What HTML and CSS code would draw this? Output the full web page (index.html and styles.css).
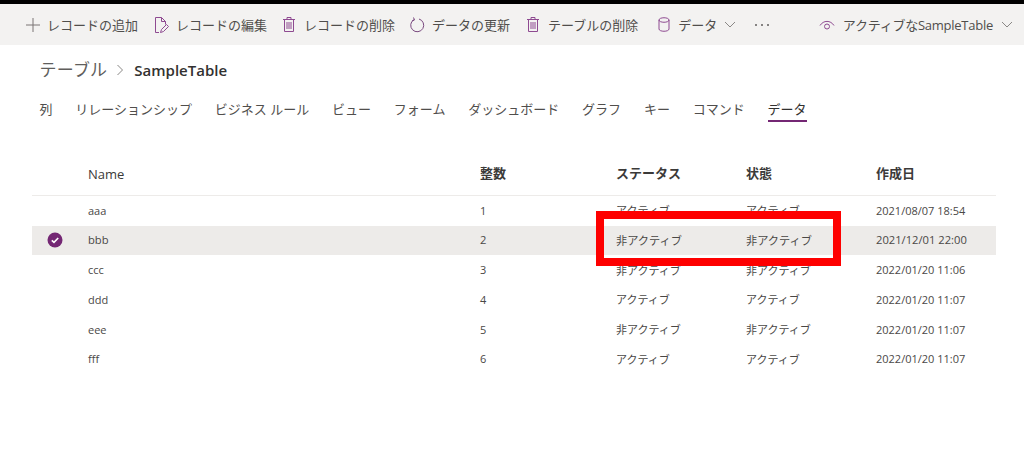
FILE: index.html
```html
<!DOCTYPE html>
<html lang="ja">
<head>
<meta charset="utf-8">
<title>SampleTable</title>
<link rel="stylesheet" href="styles.css">
</head>
<body>
<div class="topline"></div>
<header class="toolbar">
  <div class="cmds">
    <div class="cmd c-add"><svg width="16" height="16" viewBox="0 0 16 16"><path d="M8 1v14M1 8h14" stroke="#7a7574" fill="none"/></svg><span>レコードの追加</span></div>
    <div class="cmd c-edit"><svg width="16" height="18" viewBox="0 0 16 18"><path d="M6 16.500H2.500V1.500h6l4 4v3M8.500 1.500v4h4M7.500 16.500l1-3 5-5 2 2-5 5z" stroke="#8e4a91" fill="none"/></svg><span>レコードの編集</span></div>
    <div class="cmd c-del"><svg width="14" height="17" viewBox="0 0 14 17"><path d="M1 3.500h12M5 3.500V1.500h4v2M2.500 3.500v12h9v-12M5 6v7M7 6v7M9 6v7" stroke="#8e4a91" fill="none"/></svg><span>レコードの削除</span></div>
    <div class="cmd c-ref"><svg width="16" height="16" viewBox="0 0 16 16"><path d="M5 2.600A6.500 6.500 0 1 0 10 2M4.500 .5L5.500 3 3 4" stroke="#7a4a80" fill="none"/></svg><span>データの更新</span></div>
    <div class="cmd c-tdel"><svg width="14" height="17" viewBox="0 0 14 17"><path d="M1 3.500h12M5 3.500V1.500h4v2M2.500 3.500v12h9v-12M5 6v7M7 6v7M9 6v7" stroke="#8e4a91" fill="none"/></svg><span>テーブルの削除</span></div>
    <div class="cmd c-data"><svg width="12" height="15" viewBox="0 0 12 15"><path d="M1 3v9c0 3 10 3 10 0V3C11 0 1 0 1 3c0 3 10 3 10 0" stroke="#8e4a91" fill="none"/></svg><span>データ</span><svg class="chev" width="12" height="7" viewBox="0 0 12 7"><path d="M1 1l5 5 5-5" stroke="#8a8886" fill="none"/></svg></div>
    <div class="more"><i></i><i></i><i></i></div>
  </div>
  <div class="cmd view"><svg width="16" height="12" viewBox="0 0 16 12"><path d="M1 6.500C4.500 1 11.500 1 15 6.500" stroke="#8e4a91" fill="none"/><circle cx="8" cy="7.500" r="2.500" stroke="#8e4a91" fill="none"/></svg><span>アクティブなSampleTable</span><svg class="chev" width="12" height="7" viewBox="0 0 12 7"><path d="M1 1l5 5 5-5" stroke="#8a8886" fill="none"/></svg></div>
</header>
<main class="content">
  <nav class="crumb"><span class="crumb-root">テーブル</span><svg width="8" height="12" viewBox="0 0 8 12"><path d="M1.500 1l5 5-5 5" stroke="#8a8886" fill="none"/></svg><span class="crumb-cur">SampleTable</span></nav>
  <nav class="tabs">
    <span>列</span><span>リレーションシップ</span><span>ビジネス ルール</span><span>ビュー</span><span>フォーム</span><span>ダッシュボード</span><span>グラフ</span><span>キー</span><span>コマンド</span><span class="active">データ</span>
  </nav>
  <section class="grid">
    <div class="row head"><div></div><div class="name">Name</div><div class="ja">整数</div><div class="ja">ステータス</div><div class="ja">状態</div><div class="ja">作成日</div></div>
    <div class="row"><div></div><div>aaa</div><div>1</div><div>アクティブ</div><div>アクティブ</div><div>2021/08/07 18:54</div></div>
    <div class="row selected"><div class="check"><svg width="16" height="16" viewBox="0 0 16 16"><circle cx="8" cy="8" r="7.500" fill="#742774"/><path d="M4.800 8.300l2.200 2.100 4.200-4.400" stroke="#fff" stroke-width="1.600" fill="none"/></svg></div><div>bbb</div><div>2</div><div>非アクティブ</div><div>非アクティブ</div><div>2021/12/01 22:00</div></div>
    <div class="row"><div></div><div>ccc</div><div>3</div><div>非アクティブ</div><div>非アクティブ</div><div>2022/01/20 11:06</div></div>
    <div class="row"><div></div><div>ddd</div><div>4</div><div>アクティブ</div><div>アクティブ</div><div>2022/01/20 11:07</div></div>
    <div class="row"><div></div><div>eee</div><div>5</div><div>非アクティブ</div><div>非アクティブ</div><div>2022/01/20 11:07</div></div>
    <div class="row"><div></div><div>fff</div><div>6</div><div>アクティブ</div><div>アクティブ</div><div>2022/01/20 11:07</div></div>
    <div class="redbox"></div>
  </section>
</main>
</body>
</html>
```
FILE: styles.css
```css
* { box-sizing: border-box; }
html, body { margin: 0; padding: 0; }
body {
  width: 1024px;
  height: 466px;
  overflow: hidden;
  background: #fff;
  color: #323130;
  font-family: "Open Sans", "Noto Sans CJK JP", sans-serif;
}
.topline { height: 4px; background: #000; }
.toolbar {
  height: 41px;
  background: #f3f2f1;
  display: flex;
  align-items: center;
  justify-content: space-between;
  padding: 0 11px 0 25px;
  font-size: 13px;
  color: #504e4c;
}
.cmds { display: flex; align-items: center; }
.cmd { display: flex; align-items: center; gap: 6px; white-space: nowrap; }
.c-edit { margin-left: 15px; gap: 7px; }
.c-del { margin-left: 15px; gap: 8px; }
.c-ref { margin-left: 14px; gap: 7px; }
.c-tdel { margin-left: 16px; gap: 8px; }
.c-data { margin-left: 20px; gap: 8px; }
.c-data .chev { margin-left: -1px; }
.more { display: flex; gap: 4px; margin-left: 19px; }
.more i { width: 2px; height: 2px; border-radius: 50%; background: #605e5c; }
.view { gap: 8px; letter-spacing: -0.25px; }
.content { padding: 0 28px 0 32px; }
.crumb {
  display: flex;
  align-items: center;
  height: 50px;
  padding-left: 7.500px;
  gap: 9px;
}
.crumb-root { font-size: 17px; color: #605e5c; margin-bottom: 3px; letter-spacing: 0.2px; }
.crumb-cur { font-size: 15px; font-weight: 600; color: #323130; margin-left: 1px; }
.tabs {
  display: flex;
  gap: 22.800px;
  height: 32px;
  padding-left: 7.500px;
  font-size: 13px;
  line-height: 28px;
  color: #504e4c;
}
.tabs span { height: 26px; }
.tabs .active { height: 27px; border-bottom: 2px solid #742774; color: #323130; }
.grid { position: relative; margin-top: 26px; }
.row {
  display: grid;
  grid-template-columns: 56px 392px 136px 130px 130px 120px;
  align-items: center;
  height: 29.800px;
  padding-bottom: 1px;
  font-size: 11px;
  color: #4a4846;
}
.row.head {
  height: 43px;
  padding-bottom: 0;
  font-size: 13px;
  font-weight: 600;
  color: #3b3a39;
  border-bottom: 1px solid #edebe9;
}
.row.head .name { font-weight: 500; }
.ja { margin-bottom: 3px; }
.row.selected { height: 29.400px; font-size: 11.200px; background: #edebe9; }
.check { display: flex; padding-left: 15px; }
.redbox {
  position: absolute;
  left: 564px;
  top: 58px;
  width: 245px;
  height: 55px;
  border: 8px solid #fe0000;
}
```
